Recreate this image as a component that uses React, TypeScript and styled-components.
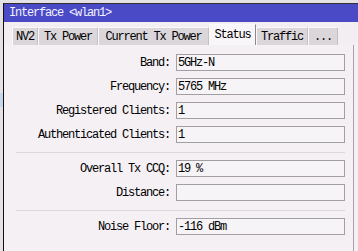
import { createGlobalStyle, styled } from "styled-components";

const GlobalStyle = createGlobalStyle`
  html, body {
    margin: 0;
    padding: 0;
    background: #e4e2e4;
  }
  body {
    font-family: "Liberation Mono", "DejaVu Sans Mono", monospace;
    font-size: 12px;
    letter-spacing: -1.2px;
    color: #000;
  }
`;

const Desktop = styled.div`
  display: flex;
  width: 358px;
  height: 251px;
  overflow: hidden;
  padding-top: 3px;
  box-sizing: border-box;
`;

const BehindStrip = styled.div`
  display: flex;
  flex-direction: column;
  width: 3px;
  flex-shrink: 0;
  margin-top: -3px;
`;

const BehindPiece = styled.div<{ $h: number; $color: string }>`
  height: ${(p) => p.$h}px;
  background: ${(p) => p.$color};
`;

const Window = styled.div`
  flex: 1;
  display: flex;
  flex-direction: column;
  border-left: 1px solid #101010;
  border-top: 1px solid #303030;
  background: #f4f0f4;
  min-width: 0;
`;

const TitleBar = styled.div`
  height: 18px;
  background: #4a4ac6;
  color: #f2f2ff;
  display: flex;
  align-items: center;
  padding-left: 5px;
  white-space: nowrap;
`;

const TabStrip = styled.div`
  height: 23px;
  display: flex;
  align-items: flex-end;
  padding-left: 8px;
  background: #f2eef2;
`;

const Tab = styled.div<{ $w: number; $active?: boolean }>`
  box-sizing: border-box;
  width: ${(p) => p.$w}px;
  height: ${(p) => (p.$active ? 21 : 18)}px;
  display: flex;
  align-items: center;
  justify-content: center;
  white-space: nowrap;
  background: ${(p) => (p.$active ? "#f8f6f8" : "#dad6da")};
  border-top: 1px solid #fbfafb;
  border-left: 1px solid #fbfafb;
  border-right: 1px solid ${(p) => (p.$active ? "#8c888c" : "#c4c0c4")};
  padding-top: ${(p) => (p.$active ? 0 : 1)}px;
`;

const Panel = styled.div`
  flex: 1;
  width: 350px;
  box-sizing: border-box;
  border-right: 1px solid #a8a4a8;
  display: flex;
  flex-direction: column;
  padding: 9px 0 0 12px;
`;

const Row = styled.div`
  display: grid;
  grid-template-columns: 154px 169px;
  column-gap: 6px;
  align-items: center;
  margin-bottom: 7px;
`;

const Label = styled.div`
  text-align: right;
  white-space: nowrap;
`;

const Field = styled.div`
  box-sizing: border-box;
  height: 17px;
  border: 1px solid #a29ea2;
  background: #f6f4f6;
  display: flex;
  align-items: center;
  padding-left: 1px;
  white-space: nowrap;
`;

const Separator = styled.div`
  width: 329px;
  height: 1px;
  background: #dcd8dc;
  margin: 2px 0 7px;
`;

const tabs = [
  { label: "NV2", w: 26 },
  { label: "Tx Power", w: 60 },
  { label: "Current Tx Power", w: 111 },
  { label: "Status", w: 47, active: true },
  { label: "Traffic", w: 52 },
  { label: "...", w: 30 },
];

type Item = { label: string; value: string } | "sep";

const items: Item[] = [
  { label: "Band:", value: "5GHz-N" },
  { label: "Frequency:", value: "5765 MHz" },
  { label: "Registered Clients:", value: "1" },
  { label: "Authenticated Clients:", value: "1" },
  "sep",
  { label: "Overall Tx CCQ:", value: "19 %" },
  { label: "Distance:", value: "" },
  "sep",
  { label: "Noise Floor:", value: "-116 dBm" },
];

export default function App() {
  return (
    <>
      <GlobalStyle />
      <Desktop>
        <BehindStrip>
          <BehindPiece $h={93} $color="#e4e2e4" />
          <BehindPiece $h={14} $color="#c6d6e8" />
        </BehindStrip>
        <Window>
          <TitleBar>Interface &lt;wlan1&gt;</TitleBar>
          <TabStrip>
            {tabs.map((t) => (
              <Tab key={t.label} $w={t.w} $active={t.active}>
                {t.label}
              </Tab>
            ))}
          </TabStrip>
          <Panel>
            {items.map((it, i) =>
              it === "sep" ? (
                <Separator key={i} />
              ) : (
                <Row key={i}>
                  <Label>{it.label}</Label>
                  <Field>{it.value}</Field>
                </Row>
              )
            )}
          </Panel>
        </Window>
      </Desktop>
    </>
  );
}
